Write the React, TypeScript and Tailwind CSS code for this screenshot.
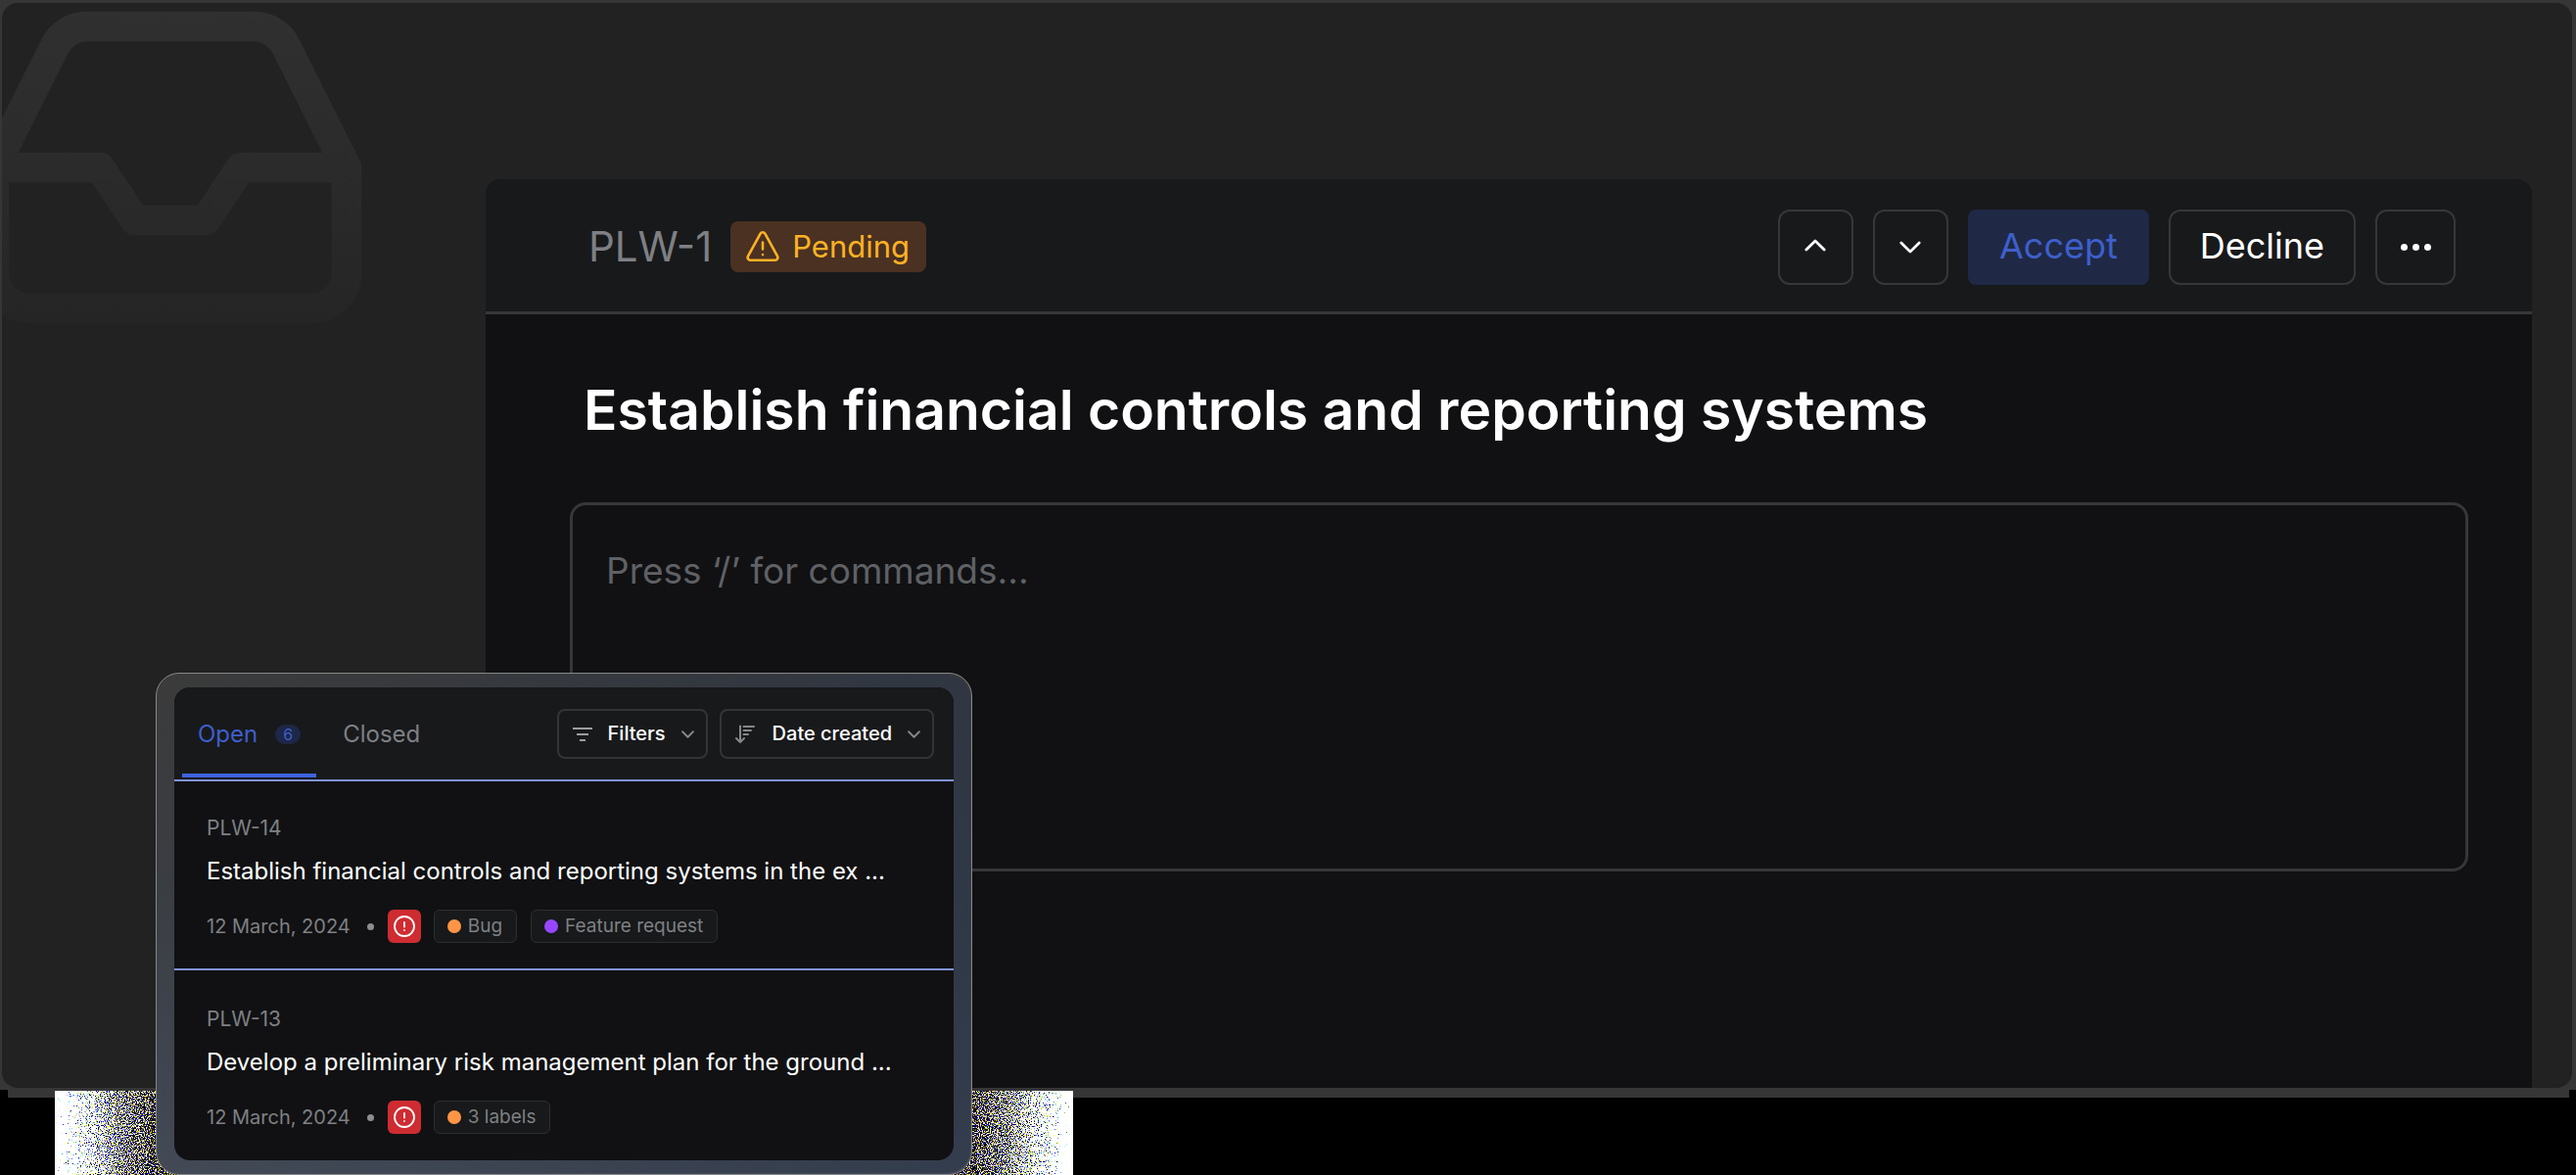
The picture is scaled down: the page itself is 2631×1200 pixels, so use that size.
import React from "react";

type Label = { name: string; dot: string };
type Issue = { id: string; title: string; date: string; labels: Label[] };

const issues: Issue[] = [
  {
    id: "PLW-14",
    title: "Establish financial controls and reporting systems in the ex ...",
    date: "12 March, 2024",
    labels: [
      { name: "Bug", dot: "bg-[#ff9545]" },
      { name: "Feature request", dot: "bg-[#9747ff]" },
    ],
  },
  {
    id: "PLW-13",
    title: "Develop a preliminary risk management plan for the ground ...",
    date: "12 March, 2024",
    labels: [{ name: "3 labels", dot: "bg-[#ff9545]" }],
  },
];

function Chevron({ className, up, width = 2 }: { className: string; up?: boolean; width?: number }) {
  return (
    <svg viewBox="0 0 24 14" className={className} fill="none" stroke="currentColor" strokeWidth={width} strokeLinecap="round" strokeLinejoin="round" aria-hidden="true">
      <path d={up ? "M2 12 12 2l10 10" : "M2 2l10 10L22 2"} />
    </svg>
  );
}

function InboxMark() {
  return (
    <svg viewBox="0 0 24 24" className="absolute -left-11 -top-12 size-[432px]" fill="none" stroke="url(#inboxFade)" strokeWidth="1.7" strokeLinecap="round" strokeLinejoin="round" aria-hidden="true">
      <defs>
        <linearGradient id="inboxFade" gradientUnits="userSpaceOnUse" x1="0" y1="3" x2="0" y2="21">
          <stop offset="0" stopColor="#303030" />
          <stop offset="0.5" stopColor="#2b2b2b" />
          <stop offset="1" stopColor="#252525" />
        </linearGradient>
      </defs>
      <path d="M22 12h-6l-2 3h-4l-2-3H2M5.45 5.11 2 12v6a2 2 0 0 0 2 2h16a2 2 0 0 0 2-2v-6l-3.45-6.89A2 2 0 0 0 16.76 4H7.24a2 2 0 0 0-1.79 1.11z" />
    </svg>
  );
}

function Grain() {
  return (
    <svg className="absolute left-[56px] top-[1114px] h-[86px] w-[1040px]" aria-hidden="true">
      <defs>
        <linearGradient id="grainFade">
          <stop offset="0" stopColor="#fff" />
          <stop offset="0.02" stopColor="#c4c4c4" />
          <stop offset="0.06" stopColor="#828282" />
          <stop offset="0.1" stopColor="#606060" />
          <stop offset="0.9" stopColor="#606060" />
          <stop offset="0.94" stopColor="#828282" />
          <stop offset="0.98" stopColor="#c4c4c4" />
          <stop offset="1" stopColor="#fff" />
        </linearGradient>
        <filter id="grain" x="0" y="0" width="100%" height="100%" colorInterpolationFilters="sRGB">
          <feTurbulence type="fractalNoise" baseFrequency="0.9" numOctaves="2" seed="4" result="n" />
          <feColorMatrix in="n" type="matrix" values="1.6 0.3 0 0 -0.45  1.4 0.5 0 0 -0.45  1 0 0.9 0 -0.45  0 0 0 0 1" result="m" />
          <feComposite in="SourceGraphic" in2="m" operator="arithmetic" k2="1" k3="1" k4="-0.5" result="s" />
          <feComponentTransfer in="s" result="t">
            <feFuncR type="linear" slope="6" intercept="-2.3" />
            <feFuncG type="linear" slope="6" intercept="-2.3" />
            <feFuncB type="linear" slope="6" intercept="-2.3" />
          </feComponentTransfer>
          <feColorMatrix in="t" type="matrix" values="1 0 0 0 0  0 1 0 0 0  0 0 1 0 0  0 0 0 0 1" />
        </filter>
      </defs>
      <rect width="1040" height="86" fill="url(#grainFade)" filter="url(#grain)" />
    </svg>
  );
}

function IssueRow({ issue }: { issue: Issue }) {
  return (
    <li className="flex flex-col border-t-2 border-[#8093d6] pb-[26px] pl-[33px] pr-6 pt-[37px] first:pt-[35px]">
      <span className="text-[21px] leading-[26px] text-[#7e8084]">{issue.id}</span>
      <a href="#" className="mt-[15px] text-[24px] leading-8 text-white">{issue.title}</a>
      <div className="mt-[23px] flex items-center text-[20px] text-[#7e8084]">
        <time dateTime="2024-03-12">{issue.date}</time>
        <span className="ml-[17px] size-[7px] rounded-full bg-[#8b8d91]" />
        <span className="ml-3.5 flex size-[34px] items-center justify-center rounded-md bg-[#ce2c31] text-white">
          <svg viewBox="0 0 24 24" className="size-6" fill="none" stroke="currentColor" strokeWidth="1.8" strokeLinecap="round" role="img" aria-label="Urgent">
            <circle cx="12" cy="12" r="10" />
            <path d="M12 8v4.5M12 16v.1" />
          </svg>
        </span>
        <ul className="ml-[13px] flex gap-3.5">
          {issue.labels.map((l) => (
            <li key={l.name} className="flex h-[34px] items-center gap-[7px] rounded-md border border-[#2c2e30] bg-[#17191a] pl-[13px] pr-3.5 text-[19px] text-[#7e8084]">
              <span className={`size-3.5 rounded-full ${l.dot}`} />
              {l.name}
            </li>
          ))}
        </ul>
      </div>
    </li>
  );
}

function InboxPopup() {
  return (
    <aside className="absolute left-[159px] top-[687px] w-[834px] rounded-3xl border border-[#85878a] bg-[linear-gradient(180deg,#3b3b3b_0%,#3a3d42_40%,#434a56_100%)] p-px">
      <div className="rounded-3xl bg-[linear-gradient(90deg,transparent_0%,#29344799_100%)] px-[17px] pb-[13px] pt-[13px]">
        <div className="overflow-hidden rounded-2xl bg-[#111113] pb-px">
          <header className="flex h-[94px] items-start justify-between bg-[#18191b] pl-2 pr-5">
            <nav className="flex h-[92px]" role="tablist">
              <button role="tab" aria-selected="true" className="flex h-full items-center gap-[18px] border-b-4 border-[#3e63dd] px-4 pt-2 text-[24px] text-[#3e5fcb]">
                Open
                <span className="rounded-full bg-[#1d2747] px-2 text-[16px] leading-5">6</span>
              </button>
              <button role="tab" aria-selected="false" className="flex h-full items-center border-b-4 border-transparent px-[27px] pt-2 text-[24px] text-[#7e8084]">Closed</button>
            </nav>
            <div className="mt-[22px] flex gap-3 text-[20px] font-medium text-white">
              <button className="flex h-[51px] items-center rounded-lg border-2 border-[#333436] pb-0.5 pl-3.5 pr-3">
                <svg viewBox="0 0 20 16" className="mr-4 mt-0.5 h-4 w-5 text-[#9c9ea1]" fill="none" stroke="currentColor" strokeWidth="2" aria-hidden="true">
                  <path d="M0 2h20M4 8h12M7 14h6" />
                </svg>
                Filters
                <Chevron className="ml-4 mt-0.5 h-2 w-[13px] text-[#85878a]" width={3.5} />
              </button>
              <button className="flex h-[51px] items-center rounded-lg border-2 border-[#333436] pb-0.5 pl-3.5 pr-3">
                <svg viewBox="0 0 20 20" className="mr-[18px] mt-0.5 size-5 text-[#85878a]" fill="none" stroke="currentColor" strokeWidth="2" strokeLinecap="round" strokeLinejoin="round" aria-hidden="true">
                  <path d="M5 1.5V18M1 14l4 4 4-4M8.5 2H19M8.5 6H16M8.5 10H13" />
                </svg>
                Date created
                <Chevron className="ml-4 mt-0.5 h-2 w-[13px] text-[#85878a]" width={3.5} />
              </button>
            </div>
          </header>
          <ul>
            {issues.map((i) => (
              <IssueRow key={i.id} issue={i} />
            ))}
          </ul>
        </div>
      </div>
    </aside>
  );
}

export default function App() {
  return (
    <div className="relative min-h-screen overflow-hidden bg-black font-['Inter',sans-serif]">
      <div className="bg-[#363636] pb-0.5 pl-0.5 pr-1 pt-[3px]">
        <div className="relative overflow-hidden rounded-2xl bg-[#222222] pl-[494px] pr-[41px] pt-[180px]">
          <InboxMark />
          <main className="relative rounded-t-2xl bg-[#111113] pb-[221px]">
            <header className="flex items-center justify-between rounded-t-2xl border-b-3 border-[#363739] bg-[#18191b] pb-[27px] pl-[105px] pr-[78px] pt-[31px]">
              <div className="mb-px flex items-center gap-[19px]">
                <span className="text-[42px] leading-[52px] text-[#7e8084]">PLW-1</span>
                <span className="flex h-[52px] items-center gap-[13px] rounded-lg bg-[#4a3122] pl-4 pr-[17px] text-[31px] text-[#ffb224]">
                  <svg viewBox="0 0 34 34" className="size-[34px]" fill="none" stroke="currentColor" strokeWidth="2.6" strokeLinecap="round" strokeLinejoin="round" aria-hidden="true">
                    <path d="M14.6 3.6 2 26.6a2.8 2.8 0 0 0 2.4 4.2h25.2a2.8 2.8 0 0 0 2.4-4.2L19.4 3.6a2.8 2.8 0 0 0-4.8 0Z" />
                    <path d="M17 12.5v7M17 25v.1" />
                  </svg>
                  Pending
                </span>
              </div>
              <div className="flex gap-5 text-[36px]">
                <button aria-label="Previous" className="flex size-[77px] items-center justify-center rounded-xl border-2 border-[#363739] pb-1 text-white">
                  <Chevron up className="h-[13px] w-[22px]" width={3} />
                </button>
                <button aria-label="Next" className="flex size-[77px] items-center justify-center rounded-xl border-2 border-[#363739] text-white">
                  <Chevron className="h-[13px] w-[22px]" width={3} />
                </button>
                <button className="h-[77px] rounded-lg bg-[#1f2945] px-8 pb-1 text-[#3e5fcb]">Accept</button>
                <button className="h-[77px] rounded-xl border-2 border-[#363739] px-[30px] pb-1 text-white">Decline</button>
                <button aria-label="More" className="flex h-[77px] w-[82px] items-center justify-center gap-[5px] rounded-xl border-2 border-[#363739]">
                  <span className="size-[7px] rounded-full bg-white" />
                  <span className="size-[7px] rounded-full bg-white" />
                  <span className="size-[7px] rounded-full bg-white" />
                </button>
              </div>
            </header>
            <h1 className="ml-[100px] mt-[62px] text-[57px] font-semibold leading-[72px] text-white">Establish financial controls and reporting systems</h1>
            <textarea aria-label="Description" placeholder="Press ‘/’ for commands..." className="ml-[86px] mt-[58px] block h-[377px] w-[calc(100%-151px)] resize-none rounded-2xl border-3 border-[#363739] bg-transparent px-[34px] py-[42px] text-[37px] leading-[50px] text-white placeholder:text-[#5f6165]" />
          </main>
        </div>
      </div>
      <div className="ml-2 mr-[7px] h-2 bg-[#363636]" />
      <Grain />
      <InboxPopup />
    </div>
  );
}
